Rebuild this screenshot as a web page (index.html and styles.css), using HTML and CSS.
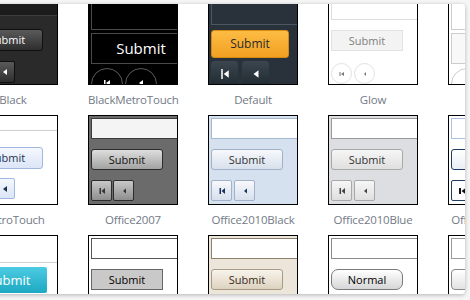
FILE: index.html
```html
<html>
<head>
<title>Skin chooser</title>
<link rel="stylesheet" href="styles.css">
</head>
<body>
<div class="panel">
<div class="grid">

<div class="skin">
	<div class="thumb black">
		<div class="tb"></div>
		<div class="btn">Submit</div>
		<div class="pager"><span class="pg"><svg viewBox="0 0 8 8"><rect x="1" y="1" width="1.5" height="6"/><path d="M7 1v6L3 4z"/></svg></span><span class="pg"><svg viewBox="0 0 8 8"><path d="M6 1v6L2 4z"/></svg></span></div>
	</div>
	<div class="name">Black</div>
</div>
<div class="skin">
	<div class="thumb bmetro">
		<div class="tb"></div>
		<div class="btn">Submit</div>
		<div class="pager"><span class="pg"><svg viewBox="0 0 8 8"><rect x="1" y="1" width="1.5" height="6"/><path d="M7 1v6L3 4z"/></svg></span><span class="pg"><svg viewBox="0 0 8 8"><path d="M6 1v6L2 4z"/></svg></span></div>
	</div>
	<div class="name">BlackMetroTouch</div>
</div>
<div class="skin">
	<div class="thumb default">
		<div class="tb"></div>
		<div class="btn">Submit</div>
		<div class="pager"><span class="pg"><svg viewBox="0 0 8 8"><rect x="1" y="0" width="1.2" height="8"/><path d="M7 1v6L3 4z"/></svg></span><span class="pg"><svg viewBox="0 0 8 8"><path d="M6 1v6L2 4z"/></svg></span></div>
	</div>
	<div class="name">Default</div>
</div>
<div class="skin">
	<div class="thumb glow">
		<div class="tb"></div>
		<div class="btn">Submit</div>
		<div class="pager"><span class="pg"><svg viewBox="0 0 8 8"><rect x="1.5" y="2" width="1" height="4"/><path d="M6 2v4L3 4z"/></svg></span><span class="pg"><svg viewBox="0 0 8 8"><path d="M5 2v4L3 4z"/></svg></span></div>
	</div>
	<div class="name">Glow</div>
</div>
<div class="skin">
	<div class="thumb metro">
		<div class="tb"></div>
		<div class="btn">Submit</div>
		<div class="pager"><span class="pg"></span><span class="pg"></span></div>
	</div>
	<div class="name">Metro</div>
</div>

<div class="skin">
	<div class="thumb lite">
		<div class="tb"></div>
		<div class="btn">Submit</div>
		<div class="pager"><span class="pg"><svg viewBox="0 0 8 8"><rect x="1" y="1" width="1.5" height="6"/><path d="M7 1v6L3 4z"/></svg></span><span class="pg"><svg viewBox="0 0 8 8"><path d="M6 1v6L2 4z"/></svg></span></div>
	</div>
	<div class="name">MetroTouch</div>
</div>
<div class="skin">
	<div class="thumb o2007">
		<div class="tb"></div>
		<div class="btn">Submit</div>
		<div class="pager"><span class="pg"><svg viewBox="0 0 8 8"><rect x="1.5" y="1" width="1.5" height="6"/><path d="M7 1v6L3.5 4z"/></svg></span><span class="pg"><svg viewBox="0 0 8 8"><path d="M6 1.5v5L3 4z"/></svg></span></div>
	</div>
	<div class="name">Office2007</div>
</div>
<div class="skin">
	<div class="thumb o10black">
		<div class="tb"></div>
		<div class="btn">Submit</div>
		<div class="pager"><span class="pg"><svg viewBox="0 0 8 8"><rect x="1.5" y="1" width="1.5" height="6"/><path d="M7 1v6L3.5 4z"/></svg></span><span class="pg"><svg viewBox="0 0 8 8"><path d="M6 1.5v5L3 4z"/></svg></span></div>
	</div>
	<div class="name">Office2010Black</div>
</div>
<div class="skin">
	<div class="thumb o10blue">
		<div class="tb"></div>
		<div class="btn">Submit</div>
		<div class="pager"><span class="pg"><svg viewBox="0 0 8 8"><rect x="1.5" y="1" width="1.5" height="6"/><path d="M7 1v6L3.5 4z"/></svg></span><span class="pg"><svg viewBox="0 0 8 8"><path d="M6 1.5v5L3 4z"/></svg></span></div>
	</div>
	<div class="name">Office2010Blue</div>
</div>
<div class="skin">
	<div class="thumb o10silver">
		<div class="tb"></div>
		<div class="btn">Submit</div>
		<div class="pager"><span class="pg"><svg viewBox="0 0 8 8"><rect x="1" y="1" width="2" height="6"/><path d="M7.5 1v6L3.5 4z"/></svg></span><span class="pg"><svg viewBox="0 0 8 8"><path d="M6 1v6L2 4z"/></svg></span></div>
	</div>
	<div class="name">Office2010Silver</div>
</div>

<div class="skin">
	<div class="thumb cyan">
		<div class="tb"></div>
		<div class="btn">Submit</div>
		<div class="pager"><span class="pg"></span><span class="pg"></span></div>
	</div>
	<div class="name">Outlook</div>
</div>
<div class="skin">
	<div class="thumb flat">
		<div class="tb"></div>
		<div class="btn">Submit</div>
		<div class="pager"><span class="pg"></span><span class="pg"></span></div>
	</div>
	<div class="name">Simple</div>
</div>
<div class="skin">
	<div class="thumb sand">
		<div class="tb"></div>
		<div class="btn">Submit</div>
		<div class="pager"><span class="pg"></span><span class="pg"></span></div>
	</div>
	<div class="name">Sitefinity</div>
</div>
<div class="skin">
	<div class="thumb normal">
		<div class="tb"></div>
		<div class="btn">Normal</div>
		<div class="pager"><span class="pg"></span><span class="pg"></span></div>
	</div>
	<div class="name">Sunset</div>
</div>
<div class="skin">
	<div class="thumb plain">
		<div class="tb"></div>
		<div class="btn">Submit</div>
		<div class="pager"><span class="pg"></span><span class="pg"></span></div>
	</div>
	<div class="name">Telerik</div>
</div>

</div>
</div>
</body>
</html>
```

FILE: styles.css
```css
body
{
	margin:0px;
	background:#f6f6f6;
	font-family:"Open Sans", "DejaVu Sans", sans-serif;
}
.panel
{
	margin:4px 0px 0px -10px;
	width:475px;
	height:290px;
	background:#ffffff;
	border-radius:4px;
	box-shadow:0px 1px 4px rgba(0,0,0,0.28);
	overflow:hidden;
}
.grid
{
	display:grid;
	grid-template-columns:repeat(5, 90px);
	column-gap:30px;
	margin:-9px 0px 0px -22px;
}
.name
{
	height:30px;
	line-height:30px;
	text-align:center;
	white-space:nowrap;
	font-size:11.5px;
	letter-spacing:-0.2px;
	color:#737a86;
}
.thumb
{
	box-sizing:border-box;
	width:90px;
	height:90px;
	border:1px #000000 solid;
	overflow:hidden;
	padding:2px;
	display:flex;
	flex-direction:column;
	align-items:flex-start;
	background:#ffffff;
}
.tb
{
	box-sizing:border-box;
	width:100px;
	height:21px;
	flex:none;
	background:#ffffff;
	border:1px #999999 solid;
}
.btn
{
	box-sizing:border-box;
	width:72px;
	height:21px;
	flex:none;
	margin-top:10px;
	font-size:11px;
	line-height:19px;
	text-align:center;
	border:1px #999999 solid;
	border-radius:3px;
}
.pager
{
	display:flex;
	gap:2px;
	margin-top:10px;
	flex:none;
}
.pg
{
	box-sizing:border-box;
	width:21px;
	height:21px;
	display:flex;
	align-items:center;
	justify-content:center;
	border:1px #999999 solid;
	border-radius:2px;
}
.pg svg
{
	width:8px;
	height:8px;
	fill:currentColor;
}

/* Black */
.black
{
	background:#2a2a2a;
}
.black .tb
{
	height:16px;
	background:#1c1c1c;
	border:none;
	border-bottom:1px #3d3d3d solid;
	margin-top:2px;
}
.black .btn
{
	margin-top:13px;
	height:22px;
	color:#ffffff;
	border-color:#101010;
	background:linear-gradient(#5a5a5a, #2e2e2e);
}
.black .pager
{
	margin-top:10px;
}
.black .pg
{
	height:22px;
	color:#ffffff;
	border-color:#101010;
	background:linear-gradient(#5a5a5a, #2e2e2e);
}

/* BlackMetroTouch */
.bmetro
{
	background:#000000;
}
.bmetro .tb
{
	height:32px;
	background:#000000;
	border:1px #4a4a4a solid;
}
.bmetro .btn
{
	width:100px;
	height:31px;
	margin-top:3px;
	border-radius:0px;
	border:1px #4a4a4a solid;
	color:#ffffff;
	font-size:15px;
	line-height:29px;
}
.bmetro .pager
{
	margin-top:4px;
}
.bmetro .pg
{
	width:32px;
	height:32px;
	border-radius:50%;
	border:1.5px #5a5a5a solid;
	color:#ffffff;
	align-items:flex-start;
	padding-top:10px;
}

/* Default */
.default
{
	background:#29323a;
}
.default .tb
{
	height:27px;
	background:#29323a;
	border:1px #4c5861 solid;
}
.default .btn
{
	width:78px;
	height:28px;
	margin-top:5px;
	font-size:12px;
	line-height:26px;
	color:#2a2a2a;
	border-color:#d68a12;
	background:linear-gradient(#fdbc44, #f2a022);
}
.default .pager
{
	margin-top:3px;
	gap:4px;
}
.default .pg
{
	width:27px;
	height:26px;
	color:#ffffff;
	border:none;
	border-radius:4px 4px 0px 0px;
	background:linear-gradient(#3b464e, #202930);
}
.default .pg svg
{
	width:10px;
	height:10px;
}

/* Glow */
.glow .tb
{
	height:22px;
	border-color:#dddddd;
}
.glow .btn
{
	margin-top:10px;
	color:#808080;
	border-color:#e2e2e2;
	border-radius:0px;
	background:#f3f3f3;
}
.glow .pager
{
	margin-top:12px;
	gap:2px;
}
.glow .pg
{
	border-radius:50%;
	border-color:#e0e0e0;
	color:#777777;
}

/* Metro */
.metro .tb
{
	height:32px;
	border-color:#cccccc;
}
.metro .btn
{
	width:100px;
	height:31px;
	margin-top:3px;
	border-radius:0px;
	border-color:#cccccc;
	background:#f8f8f8;
}
.metro .pager
{
	margin-top:4px;
}
.metro .pg
{
	width:32px;
	height:32px;
	border-radius:50%;
	border-color:#cccccc;
}

/* row 2 */
.lite .tb
{
	height:16px;
	margin-top:-3px;
	border:none;
	border-bottom:1px #cfcfcf solid;
}
.lite .btn
{
	margin-top:16px;
	height:22px;
	color:#1e3050;
	border-color:#9fb8df;
	background:linear-gradient(#f4f7fd, #dce6f7);
}
.lite .pager
{
	margin-top:9px;
}
.lite .pg
{
	color:#1e3050;
	border-color:#9fb8df;
	background:linear-gradient(#f4f7fd, #dce6f7);
}

.o2007
{
	background:#6b6b6b;
}
.o2007 .tb
{
	background:#f4f4f4;
	border-color:#3c3c3c;
}
.o2007 .btn
{
	color:#111111;
	border-color:#2c2c2c;
	background:linear-gradient(#dedede, #a2a2a2);
}
.o2007 .pager
{
	gap:1px;
}
.o2007 .pg
{
	color:#333333;
	border-color:#2c2c2c;
	background:linear-gradient(#c8c8c8, #8e8e8e);
}

.o10black
{
	background:#d6e1ef;
}
.o10black .tb
{
	border-color:#a6b8cf;
}
.o10black .btn
{
	color:#333333;
	border-color:#a0b1c8;
	background:linear-gradient(#f7f9fc, #d7e0ec);
}
.o10black .pg
{
	color:#1c3560;
	border-color:#a0b1c8;
	background:linear-gradient(#f7f9fc, #d7e0ec);
}

.o10blue
{
	background:#dcdee2;
}
.o10blue .tb
{
	border-color:#9a9a9a;
}
.o10blue .btn
{
	color:#333333;
	border-color:#a8a8a8;
	background:linear-gradient(#f6f6f6, #dfdfdf);
}
.o10blue .pg
{
	color:#444444;
	border-color:#a8a8a8;
	background:linear-gradient(#f6f6f6, #dfdfdf);
}

.o10silver .tb
{
	border-color:#a9c3e3;
}
.o10silver .btn
{
	border:1.5px #1f3d63 solid;
	background:linear-gradient(#ffffff, #e9eef5);
}
.o10silver .pg
{
	color:#111111;
	border:1.5px #1f3d63 solid;
}

/* row 3 */
.cyan .tb
{
	height:28px;
	margin-top:-3px;
	border:none;
	border-bottom:1px #d0d0d0 solid;
}
.cyan .btn
{
	margin-top:4px;
	width:76px;
	height:26px;
	border:none;
	border-radius:2px;
	color:#ffffff;
	font-size:13px;
	line-height:26px;
	background:linear-gradient(#4ccbe2, #1ea8c2);
}

.flat .tb
{
	border-color:#555555;
}
.flat .btn
{
	border-radius:0px;
	border-color:#666666;
	background:#c9c9c9;
	color:#000000;
}

.sand
{
	background:#ece6da;
}
.sand .tb
{
	border-color:#8c806e;
}
.sand .btn
{
	color:#3a2a1a;
	border-color:#a89a86;
	background:linear-gradient(#f8f4ec, #ddd2bf);
}

.normal .tb
{
	border-color:#8a8a8a;
}
.normal .btn
{
	border-radius:7px;
	border-color:#7a7a7a;
	color:#000000;
	background:linear-gradient(#ffffff, #d6d6d6);
}

.plain .tb
{
	border-color:#9a9a9a;
}
.plain .btn
{
	border-color:#888888;
	border-radius:4px;
	background:linear-gradient(#ffffff, #e2e2e2);
}
```
